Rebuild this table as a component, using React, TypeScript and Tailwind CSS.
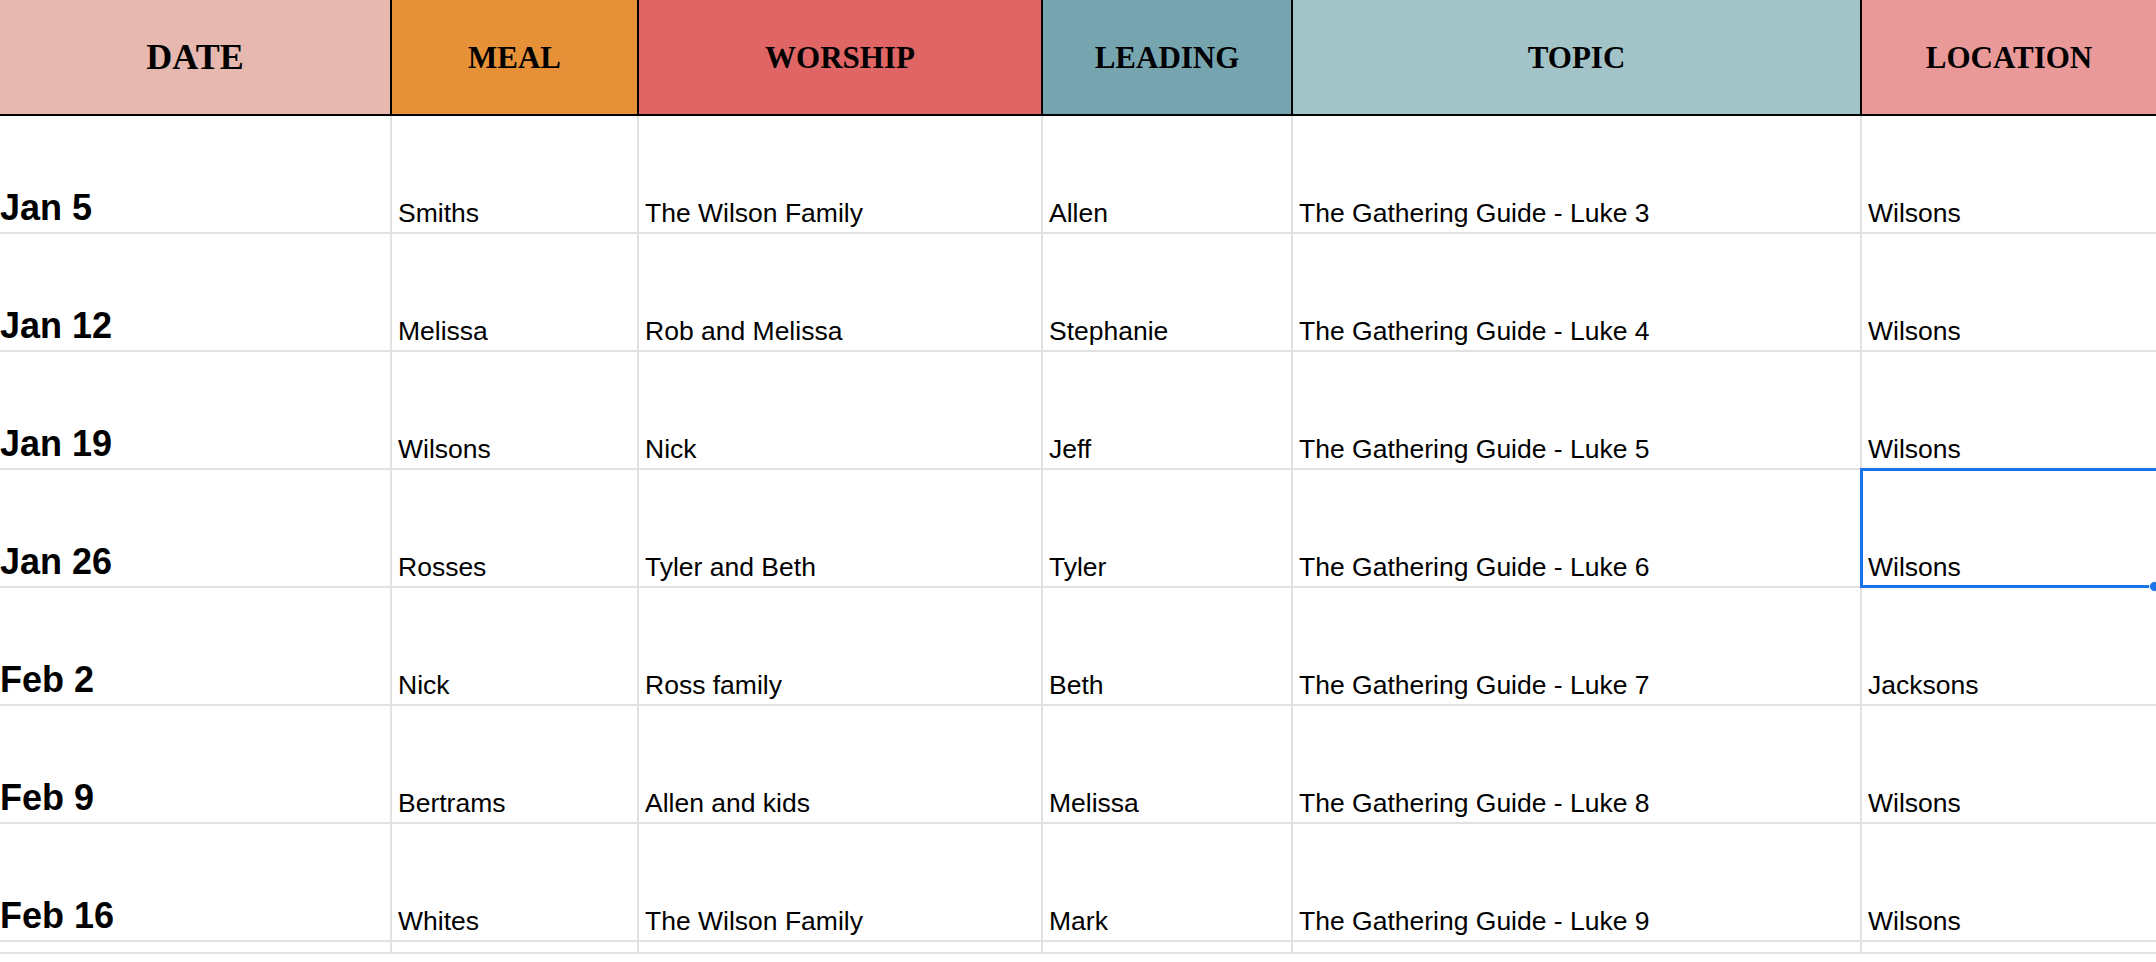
import { FC } from "react";

type Column = {
  label: string;
  bg: string;
  size: string;
};

// Header colours are the Google Sheets palette swatches
const columns: Column[] = [
  { label: "DATE", bg: "bg-[#e6b8af]", size: "text-[36px]" },
  { label: "MEAL", bg: "bg-[#e69138]", size: "text-[31px]" },
  { label: "WORSHIP", bg: "bg-[#e06666]", size: "text-[31px]" },
  { label: "LEADING", bg: "bg-[#76a5af]", size: "text-[31px]" },
  { label: "TOPIC", bg: "bg-[#a2c4c9]", size: "text-[31px]" },
  { label: "LOCATION", bg: "bg-[#ea9999]", size: "text-[31px]" },
];

type Row = {
  date: string;
  meal: string;
  worship: string;
  leading: string;
  topic: string;
  location: string;
};

const rows: Row[] = [
  { date: "Jan 5", meal: "Smiths", worship: "The Wilson Family", leading: "Allen", topic: "The Gathering Guide - Luke 3", location: "Wilsons" },
  { date: "Jan 12", meal: "Melissa", worship: "Rob and Melissa", leading: "Stephanie", topic: "The Gathering Guide - Luke 4", location: "Wilsons" },
  { date: "Jan 19", meal: "Wilsons", worship: "Nick", leading: "Jeff", topic: "The Gathering Guide - Luke 5", location: "Wilsons" },
  { date: "Jan 26", meal: "Rosses", worship: "Tyler and Beth", leading: "Tyler", topic: "The Gathering Guide - Luke 6", location: "Wilsons" },
  { date: "Feb 2", meal: "Nick", worship: "Ross family", leading: "Beth", topic: "The Gathering Guide - Luke 7", location: "Jacksons" },
  { date: "Feb 9", meal: "Bertrams", worship: "Allen and kids", leading: "Melissa", topic: "The Gathering Guide - Luke 8", location: "Wilsons" },
  { date: "Feb 16", meal: "Whites", worship: "The Wilson Family", leading: "Mark", topic: "The Gathering Guide - Luke 9", location: "Wilsons" },
];

const SELECTED_ROW = 3;

const cellBase =
  "h-[118px] border-b-2 border-r-2 border-[#e1e1e1] flex items-end pb-[6px] leading-none whitespace-nowrap overflow-visible";

const App: FC = () => {
  return (
    <div className="w-full h-screen overflow-hidden bg-white text-black font-['Liberation_Sans',Arial,sans-serif]">
      <div className="grid w-[2158px] grid-cols-[392px_247px_404px_250px_569px_296px]">
        {/* Header row */}
        {columns.map((col) => (
          <div
            key={col.label}
            className={`${col.bg} h-[116px] border-b-2 border-r-2 border-black flex items-center justify-center`}
          >
            <span
              className={`${col.size} font-bold leading-none font-['Liberation_Serif',serif]`}
            >
              {col.label}
            </span>
          </div>
        ))}

        {/* Schedule rows */}
        {rows.map((row, index) => (
          <div key={row.date} className="contents">
            <div className={`${cellBase} pl-0 text-[36px] font-bold`}>
              {row.date}
            </div>
            <div className={`${cellBase} pl-[6px] text-[26.5px]`}>{row.meal}</div>
            <div className={`${cellBase} pl-[6px] text-[26.5px]`}>{row.worship}</div>
            <div className={`${cellBase} pl-[6px] text-[26.5px]`}>{row.leading}</div>
            <div className={`${cellBase} pl-[6px] text-[26.5px]`}>{row.topic}</div>
            <div className={`${cellBase} pl-[6px] text-[26.5px] relative`}>
              {row.location}
              {index === SELECTED_ROW && (
                // selection box runs past the right edge of the window
                <div className="absolute -left-[2px] -top-[2px] -right-[6px] -bottom-[2px] border-[3px] border-[#1a73e8] pointer-events-none">
                  <div className="absolute -right-[1px] -bottom-[7px] w-[11px] h-[11px] rounded-full bg-[#1a73e8] border border-white" />
                </div>
              )}
            </div>
          </div>
        ))}

        {/* Next row peeking in at the bottom */}
        {columns.map((col) => (
          <div
            key={`tail-${col.label}`}
            className="h-[12px] border-b-2 border-r-2 border-[#e1e1e1]"
          />
        ))}
      </div>
    </div>
  );
};

export default App;
